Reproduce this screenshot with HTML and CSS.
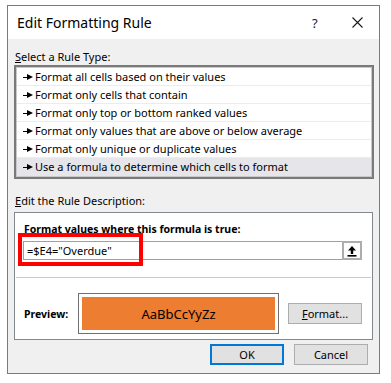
FILE: index.html
```html
<!DOCTYPE html>
<html lang="en">
<head>
    <meta charset="UTF-8">
    <title>Edit Formatting Rule</title>
    <link rel="stylesheet" href="styles.css">
</head>
<body>
    <div class="dialog">
        <div class="titlebar">
            <span class="title">Edit Formatting Rule</span>
            <span class="help">?</span>
            <svg class="close" width="11" height="11" viewBox="0 0 11 11">
                <path d="M0.5 0.5 L10.5 10.5 M10.5 0.5 L0.5 10.5" stroke="#1a1a1a" stroke-width="1.1" fill="none"/>
            </svg>
        </div>

        <div class="content">
            <div class="label"><u>S</u>elect a Rule Type:</div>
            <ul class="rule-list">
                <li><span class="arrow"></span>Format all cells based on their values</li>
                <li><span class="arrow"></span>Format only cells that contain</li>
                <li><span class="arrow"></span>Format only top or bottom ranked values</li>
                <li><span class="arrow"></span>Format only values that are above or below average</li>
                <li><span class="arrow"></span>Format only unique or duplicate values</li>
                <li class="selected"><span class="arrow"></span>Use a formula to determine which cells to format</li>
            </ul>

            <div class="label second"><u>E</u>dit the Rule Description:</div>
            <div class="panel">
                <div class="panel-label">F<u>o</u>rmat values where this formula is true:</div>
                <div class="formula-row">
                    <div class="formula">=$E4="Overdue"</div>
                    <div class="collapse">
                        <svg width="12" height="12" viewBox="0 0 12 12">
                            <path d="M6 1 L2 5.5 H4.8 V9 H7.2 V5.5 H10 Z" fill="#000"/>
                            <rect x="1.5" y="10" width="9" height="1.6" fill="#000"/>
                        </svg>
                    </div>
                    <div class="highlight"></div>
                </div>
                <div class="divider"></div>
                <div class="preview-row">
                    <div class="preview-label">Preview:</div>
                    <div class="preview-box">
                        <div class="preview-fill">AaBbCcYyZz</div>
                    </div>
                    <button class="btn format-btn"><u>F</u>ormat...</button>
                </div>
            </div>

            <div class="actions">
                <button class="btn ok">OK</button>
                <button class="btn">Cancel</button>
            </div>
        </div>
    </div>
</body>
</html>
```

FILE: styles.css
```css
body {
    margin: 0;
    background: #ffffff;
    font-family: "Noto Sans", "Open Sans", sans-serif;
    font-size: 11px;
    color: #000;
}

.dialog {
    margin: 5px 0 0 7px;
    width: 373px;
    height: 369px;
    box-sizing: border-box;
    border: 1px solid #7a7a7a;
    background: #f0f0f0;
    display: flex;
    flex-direction: column;
}

/* Title bar */
.titlebar {
    height: 33px;
    background: #ffffff;
    display: flex;
    align-items: center;
    padding-left: 9px;
}

.title {
    font-size: 14px;
    flex: 1;
}

.help {
    font-size: 13px;
    width: 40px;
    color: #1a1a1a;
}

.close {
    margin-right: 16px;
}

/* Body */
.content {
    flex: 1;
    padding: 0 5px 0 6px;
}

.label {
    margin: 10px 0 0 1px;
    height: 16px;
    line-height: 16px;
}

.label.second {
    margin-top: 14px;
}

.rule-list {
    list-style: none;
    margin: 0;
    padding: 1px;
    height: 114px;
    box-sizing: border-box;
    border: 2px solid #7a7a7a;
    box-shadow: inset 0 0 0 1px #c8c8c8;
    background: #ffffff;
}

.rule-list li {
    height: 18px;
    line-height: 18px;
    box-sizing: border-box;
    border-bottom: 1px solid #ececec;
    padding: 1px 0 0 6px;
    display: flex;
    align-items: center;
    white-space: nowrap;
}

.rule-list li.selected {
    background: #e5e5ea;
    border-bottom-color: transparent;
}

.arrow {
    width: 10px;
    height: 7px;
    margin-right: 2px;
    position: relative;
    display: inline-block;
    flex: none;
}

.arrow::before {
    content: "";
    position: absolute;
    left: 0;
    top: 3px;
    width: 5px;
    height: 1px;
    background: #000;
}

.arrow::after {
    content: "";
    position: absolute;
    left: 4px;
    top: 0;
    border-left: 6px solid #000;
    border-top: 3.5px solid transparent;
    border-bottom: 3.5px solid transparent;
}

/* Description panel */
.panel {
    margin-top: 3px;
    height: 128px;
    width: 359px;
    box-sizing: border-box;
    border: 1px solid #828790;
    background: #ffffff;
}

.panel-label {
    font-weight: bold;
    font-size: 10.5px;
    margin: 8px 0 0 9px;
    height: 16px;
    line-height: 16px;
}

.formula-row {
    position: relative;
    display: flex;
    margin: 4px 0 0 8px;
    width: 339px;
    height: 19px;
    box-sizing: border-box;
    border: 1px solid #a0a0a0;
}

.formula {
    flex: 1;
    padding-left: 3px;
    line-height: 17px;
}

.collapse {
    width: 20px;
    height: 19px;
    margin: -1px -1px 0 0;
    box-sizing: border-box;
    border: 2px solid #adadad;
    background: #fdfdfd;
    display: flex;
    align-items: center;
    justify-content: center;
}

.highlight {
    position: absolute;
    left: -6px;
    top: -9px;
    width: 125px;
    height: 33px;
    box-sizing: border-box;
    border: 4px solid #ff0000;
}

.divider {
    margin: 17px 0 0 1px;
    width: 355px;
    height: 1px;
    background: #c8c8c8;
}

.preview-row {
    display: flex;
    align-items: center;
    margin-top: 15px;
    padding-left: 9px;
}

.preview-label {
    font-weight: bold;
    font-size: 10.5px;
    width: 54px;
}

.preview-box {
    width: 201px;
    height: 41px;
    box-sizing: border-box;
    border: 1px solid #707070;
    padding: 3px;
    background: #ffffff;
}

.preview-fill {
    height: 100%;
    background: #ed7d31;
    display: flex;
    align-items: center;
    justify-content: center;
    font-size: 13px;
}

.btn {
    font-family: inherit;
    font-size: 11px;
    color: #000;
    background: #e1e1e1;
    border: 1px solid #adadad;
    padding: 0;
    width: 74px;
    height: 21px;
}

.format-btn {
    margin-left: 9px;
}

.actions {
    display: flex;
    justify-content: flex-end;
    gap: 10px;
    margin: 4px 6px 0 0;
}

.btn.ok {
    border: 2px solid #0078d7;
}
```
